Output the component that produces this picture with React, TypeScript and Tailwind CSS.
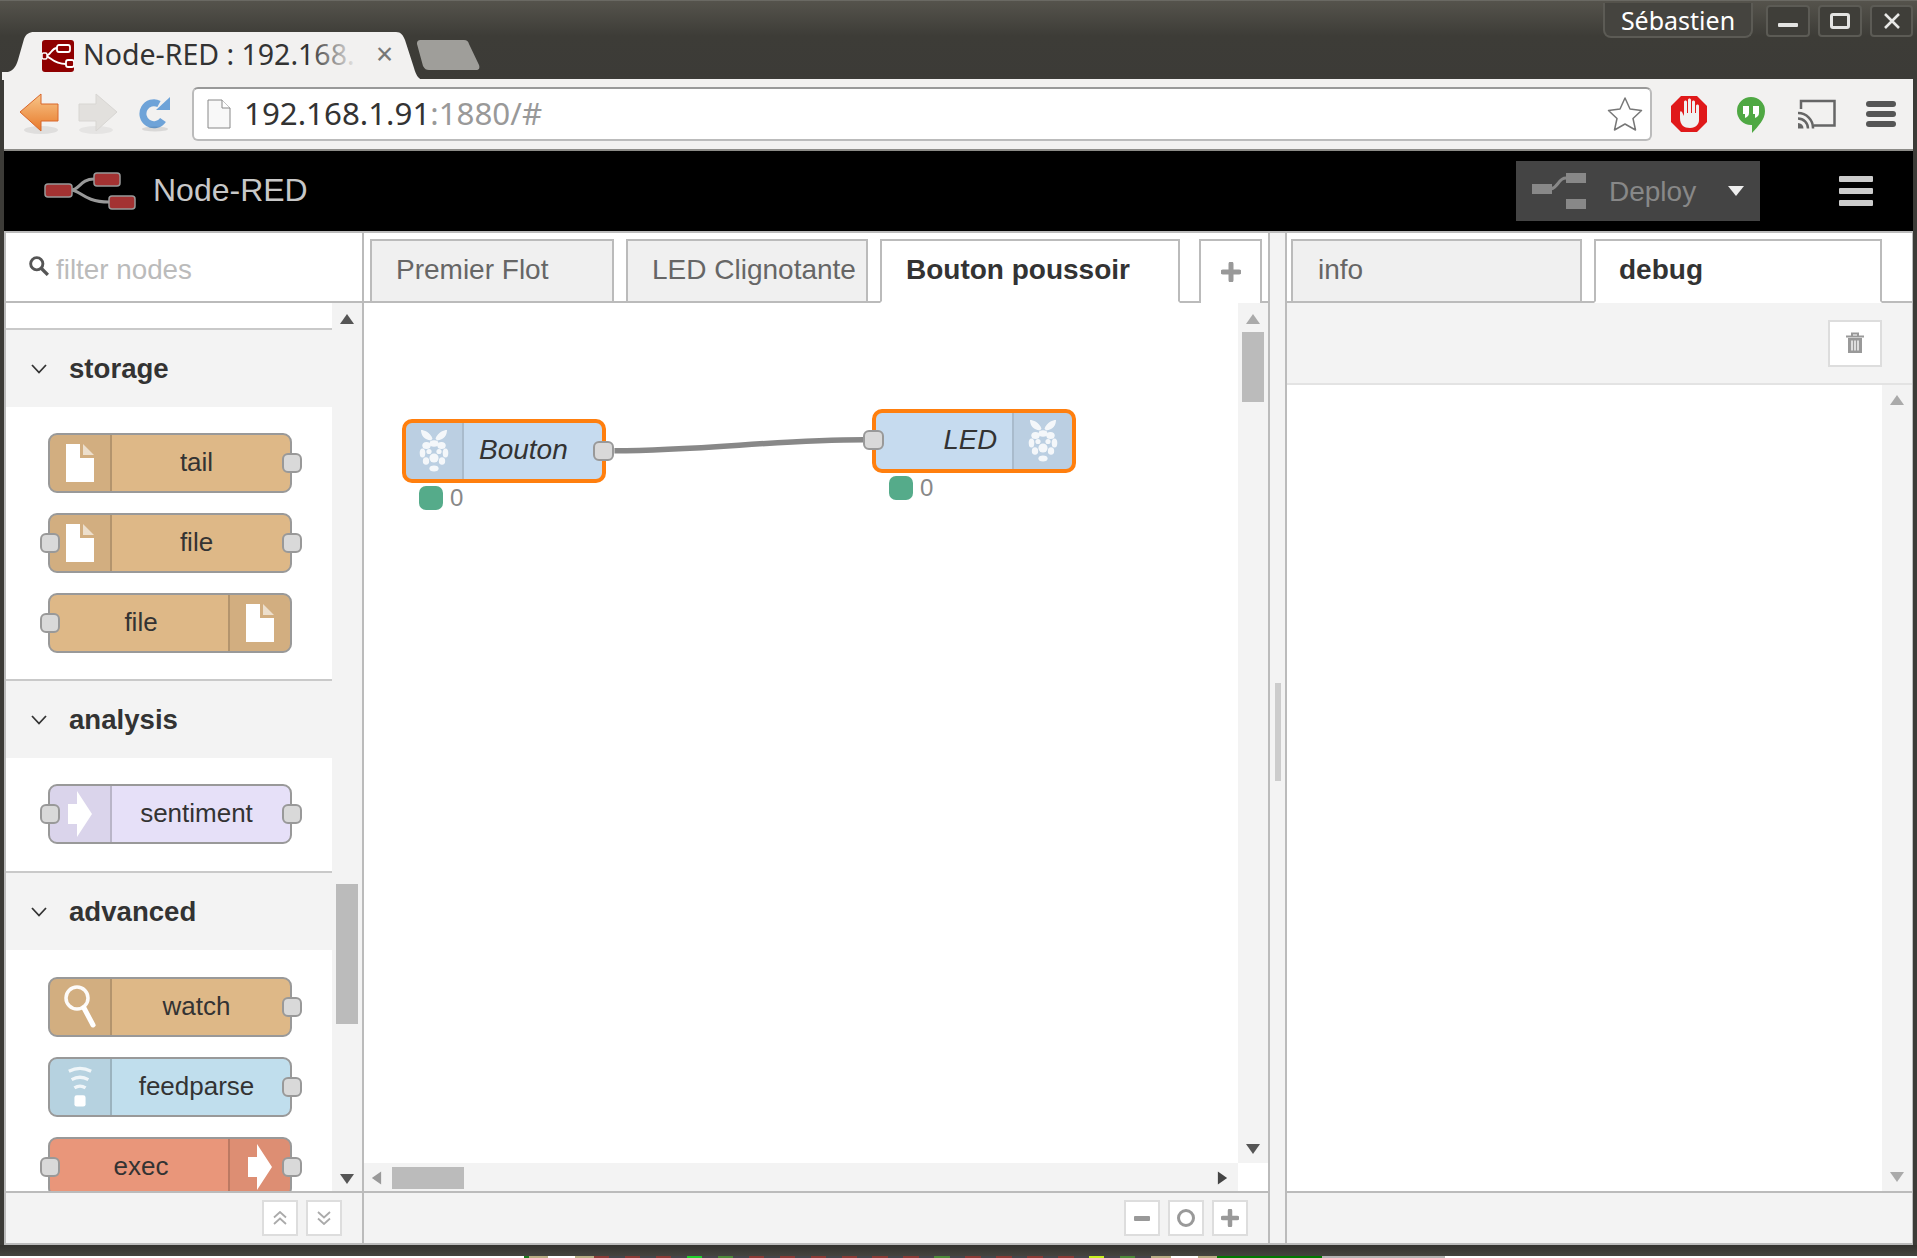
import React from "react";

const UI = "font-['Liberation_Sans',Arial,sans-serif]";
const CHROME = "font-['Noto_Sans',sans-serif]";

function Tri({ dir, color, className }: { dir: "up" | "down" | "left" | "right"; color: string; className?: string }) {
  const pts = { up: "0,12 7,2 14,12", down: "0,2 14,2 7,12", left: "12,0 12,14 2,7", right: "2,0 2,14 12,7" }[dir];
  return (
    <svg viewBox="0 0 14 14" className={className ?? "w-[14px] h-[14px]"}>
      <polygon points={pts} fill={color} />
    </svg>
  );
}

function FileIcon() {
  return (
    <svg viewBox="0 0 28 38" className="w-[28px] h-[38px]">
      <path d="M0 0H14V14H28V38H0Z" fill="#fff" />
      <path d="M17 0L28 11H17Z" fill="#fff" fillOpacity="0.6" />
    </svg>
  );
}
function ArrowIcon() {
  return (
    <svg viewBox="0 0 24 46" className="w-[24px] h-[46px]">
      <path d="M0 13H9V0L24 23L9 46V33H0Z" fill="#fff" />
    </svg>
  );
}
function WatchIcon() {
  return (
    <svg viewBox="0 0 32 44" className="w-[32px] h-[44px]">
      <circle cx="13" cy="13" r="11" fill="none" stroke="#fff" strokeWidth="3.5" opacity="0.95" />
      <path d="M20 23L29 40" stroke="#fff" strokeWidth="5" strokeLinecap="round" />
    </svg>
  );
}
function FeedIcon() {
  return (
    <svg viewBox="0 0 28 44" className="w-[26px] h-[42px]">
      <path d="M2 5Q14 -1 26 5" fill="none" stroke="#fff" strokeWidth="3.5" opacity="0.8" />
      <path d="M5 14Q14 9 23 14" fill="none" stroke="#fff" strokeWidth="3.5" opacity="0.8" />
      <path d="M8 23Q14 19 20 23" fill="none" stroke="#fff" strokeWidth="3.5" opacity="0.8" />
      <rect x="8" y="31" width="12" height="12" rx="2.5" fill="#fff" />
    </svg>
  );
}
function PiIcon() {
  return (
    <svg viewBox="0 0 32 44" className="w-[32px] h-[44px]">
      <g fill="#fff" opacity="0.85">
        <path d="M14.500 9.500C12 3 6 1 3 1C3 6 6 11 13 11.500Z" />
        <path d="M17.500 9.500C20 3 26 1 29 1C29 6 26 11 19 11.500Z" />
        <ellipse cx="16" cy="14.500" rx="4.500" ry="3.200" />
        <ellipse cx="8.500" cy="16.500" rx="4.200" ry="3.600" />
        <ellipse cx="23.500" cy="16.500" rx="4.200" ry="3.600" />
        <ellipse cx="4.500" cy="24" rx="2.800" ry="4.600" />
        <ellipse cx="27.500" cy="24" rx="2.800" ry="4.600" />
        <circle cx="11" cy="22.500" r="2.600" />
        <circle cx="21" cy="22.500" r="2.600" />
        <circle cx="16" cy="29" r="4.600" />
        <ellipse cx="8" cy="32" rx="3.200" ry="3.800" />
        <ellipse cx="24" cy="32" rx="3.200" ry="3.800" />
        <ellipse cx="16" cy="39.500" rx="4.600" ry="3" />
      </g>
    </svg>
  );
}

function Port({ className }: { className: string }) {
  return <div className={`absolute h-[20px] rounded-[6px] border-[2px] border-[#999] bg-[#d9d9d9] ${className}`} />;
}

function PaletteNode({
  label,
  color,
  icon,
  side,
  inPort,
  outPort,
}: {
  label: string;
  color: string;
  icon: React.ReactNode;
  side: "l" | "r";
  inPort?: boolean;
  outPort?: boolean;
}) {
  const iconBox = (
    <div
      className={`w-[62px] h-full shrink-0 flex items-center justify-center bg-black/5 ${
        side === "l" ? "border-r-2 rounded-l-[7px]" : "border-l-2 rounded-r-[7px]"
      } border-black/15`}
    >
      {icon}
    </div>
  );
  return (
    <div className={`relative w-[244px] h-[60px] rounded-[9px] border-2 border-[#999] flex ${color}`}>
      {side === "l" && iconBox}
      <div className={`flex-1 flex items-center justify-center pb-[2px] text-[26px] text-[#333] ${side === "l" ? "pr-[9px]" : "pl-[4px]"}`}>
        {label}
      </div>
      {side === "r" && iconBox}
      {inPort && <Port className="w-[20px] left-[-10px] top-[18px]" />}
      {outPort && <Port className="w-[20px] right-[-12px] top-[18px]" />}
    </div>
  );
}

function GroupHeader({ title }: { title: string }) {
  return (
    <div className="h-[79px] border-t-2 border-[#c9c9c9] bg-[#f3f3f3] flex items-center pl-[25px]">
      <svg viewBox="0 0 16 10" className="w-[16px] h-[10px] mr-[22px]">
        <path d="M1 1L8 8.5L15 1" fill="none" stroke="#333" strokeWidth="1.8" />
      </svg>
      <span className="text-[27.6px] font-bold text-[#333]">{title}</span>
    </div>
  );
}

function Tab({ label, active, w, pad, className = "" }: { label: string; active?: boolean; w: string; pad: string; className?: string }) {
  return (
    <div
      className={`h-[64px] mb-[-2px] border-2 border-[#bbb] flex items-center text-[28px] shrink-0 ${pad} ${w} ${className} ${
        active ? "bg-white border-b-white font-bold text-[#333]" : "bg-[#f0f0f0] text-[#666]"
      }`}
    >
      <span className="relative top-[-1px] whitespace-nowrap">{label}</span>
    </div>
  );
}

function SmallBtn({ children, className = "" }: { children: React.ReactNode; className?: string }) {
  return (
    <div className={`w-[36px] h-[36px] bg-white border-2 border-[#ddd] flex items-center justify-center ${className}`}>{children}</div>
  );
}

function WinBtn({ children, w }: { children: React.ReactNode; w: string }) {
  return (
    <div className={`${w} h-[32px] rounded-[4px] border-2 border-[#5c5b55] bg-[#3f3e39] flex items-center justify-center`}>{children}</div>
  );
}

function CanvasStatus({ className }: { className: string }) {
  return (
    <div className={`absolute flex items-center gap-[7px] ${className}`}>
      <div className="w-[24px] h-[24px] rounded-[7px] bg-[#55ab8a]" />
      <span className="text-[24px] leading-none text-[#888]">0</span>
    </div>
  );
}

function TitleBar() {
  return (
    <div className="h-[79px] flex bg-[linear-gradient(#55534c,#3d3c37_45%,#3c3b37)] border-t border-[#6a6963]">
      <div className={`relative w-[422px] h-[48px] mt-[31px] shrink-0 flex items-center ${CHROME}`}>
        <svg viewBox="0 0 422 48" className="absolute inset-0 w-[422px] h-[48px]">
          <path d="M2 48V40H8C14 38 16 34 18 28L24 7C26 2 29 0 34 0H396C401 0 403 3 405 8L414 36C416 43 418 46 422 48Z" fill="#f2f1f0" />
        </svg>
        <svg viewBox="0 0 32 32" className="relative ml-[42px] w-[32px] h-[32px]">
          <rect width="32" height="32" rx="3" fill="#8f0000" />
          <path d="M3 16C9 16 9 8 15 8M3 16C9 16 10 24 24 24" fill="none" stroke="#fff" strokeWidth="1.8" />
          <rect x="15" y="5" width="13" height="7" rx="2" fill="#8f0000" stroke="#fff" strokeWidth="1.8" />
          <rect x="24" y="20" width="8" height="7" rx="2" fill="#8f0000" stroke="#fff" strokeWidth="1.8" />
          <rect x="0" y="13" width="5" height="6" rx="1.5" fill="#8f0000" stroke="#fff" strokeWidth="1.5" />
        </svg>
        <div className="relative top-[-2px] ml-[9px] w-[279px] whitespace-nowrap text-[28.5px] leading-none text-[#333]">
          Node-RED : 192.168.
          <div className="absolute left-[225px] w-[50px] top-0 bottom-0 bg-[linear-gradient(to_right,rgba(242,241,240,0),#f2f1f0)]" />
        </div>
        <span className="relative top-[-2px] ml-[14px] text-[30px] leading-none text-[#777]">×</span>
      </div>
      <div className="mt-[9px] ml-[-5px] w-[63px] h-[30px] shrink-0 relative top-[30px]">
        <svg viewBox="0 0 63 30" className="w-[63px] h-[30px]">
          <path d="M0 4C0 1 1 0 4 0H47C50 0 51 1 52 4L62 25C63 28 62 30 59 30H12C9 30 8 29 6 26Z" fill="#9f9e9a" />
        </svg>
      </div>
      <div className="flex-1" />
      <div className={`flex items-start pr-[4px] ${CHROME}`}>
        <div className="w-[150px] h-[35px] mt-[2px] rounded-b-[8px] border-2 border-t-0 border-[#5c5b55] flex items-center justify-center text-[25px] pt-[2px] text-white bg-[#45443f]">
          Sébastien
        </div>
        <div className="flex gap-[8px] ml-[13px] mt-[4px]">
          <WinBtn w="w-[44px]">
            <div className="w-[20px] h-[4px] mt-[8px] bg-[#e4e4e2] rounded-[1px]" />
          </WinBtn>
          <WinBtn w="w-[44px]">
            <div className="w-[20px] h-[16px] border-[3px] border-[#e4e4e2] rounded-[3px]" />
          </WinBtn>
          <WinBtn w="w-[43px]">
            <svg viewBox="0 0 16 16" className="w-[16px] h-[16px]">
              <path d="M1 1L15 15M15 1L1 15" stroke="#e8e8e6" strokeWidth="2.6" />
            </svg>
          </WinBtn>
        </div>
      </div>
    </div>
  );
}

function Toolbar() {
  return (
    <div className={`h-[72px] bg-[#f2f1f0] border-b-2 border-[#8d8c88] flex items-center shrink-0 ${CHROME}`}>
      <svg viewBox="0 0 40 42" className="ml-[15px] w-[40px] h-[42px]">
        <defs>
          <linearGradient id="bk" x1="0" y1="0" x2="0" y2="1">
            <stop offset="0" stopColor="#f7c68a" />
            <stop offset="1" stopColor="#e8792a" />
          </linearGradient>
        </defs>
        <ellipse cx="22" cy="37" rx="17" ry="4" fill="#000" opacity="0.08" />
        <path d="M1 19L22 1V11H39V28H22V38Z" fill="url(#bk)" stroke="#d9662a" strokeWidth="1" />
      </svg>
      <svg viewBox="0 0 40 42" className="ml-[19px] w-[40px] h-[42px]">
        <ellipse cx="18" cy="37" rx="17" ry="4" fill="#000" opacity="0.05" />
        <path d="M39 19L18 1V11H1V28H18V38Z" fill="#e2e0dd" stroke="#d8d6d3" strokeWidth="1" />
      </svg>
      <svg viewBox="0 0 32 36" className="ml-[21px] w-[32px] h-[36px]">
        <path d="M24 24A11 11 0 1 1 20 8" fill="none" stroke="#6ea3d8" strokeWidth="7" />
        <path d="M17 14L31 14L31 1Z" fill="#6ea3d8" />
        <ellipse cx="16" cy="33" rx="13" ry="2.5" fill="#000" opacity="0.1" />
      </svg>
      <div className="ml-[21px] w-[1460px] h-[54px] rounded-[6px] border-2 border-[#bbb] border-t-[#999] bg-white flex items-center">
        <svg viewBox="0 0 24 30" className="ml-[13px] w-[24px] h-[30px]">
          <path d="M1 1H15L23 9V29H1Z" fill="#f8f8f8" stroke="#888" strokeWidth="1" />
          <path d="M15 1V9H23" fill="#fff" stroke="#888" strokeWidth="1" />
        </svg>
        <div className="ml-[13px] text-[31.3px] leading-none whitespace-nowrap">
          <span className="text-[#333]">192.168.1.91</span>
          <span className="text-[#999]">:1880/#</span>
        </div>
        <div className="flex-1" />
        <svg viewBox="0 0 36 36" className="mr-[7px] w-[36px] h-[36px]">
          <path d="M18 2L23 13L34.500 14.500L26 22.500L28.500 34L18 28L7.500 34L10 22.500L1.500 14.500L13 13Z" fill="#fff" stroke="#777" strokeWidth="1.5" strokeLinejoin="round" />
        </svg>
      </div>
      <svg viewBox="0 0 36 36" className="ml-[19px] w-[36px] h-[36px]">
        <path d="M10 0H26L36 10V26L26 36H10L0 26V10Z" fill="#e0191a" />
        <path d="M9 17V22C9 29 13 32 19 32C25 32 28 28 28 24V10C28 8 25 8 25 10V17H24V6C24 4 21 4 21 6V17H20V4C20 2 17 2 17 4V17H16V6C16 4 13 4 13 6V20L11 16C10 15 9 15 9 17Z" fill="#f1f1f1" />
      </svg>
      <svg viewBox="0 0 28 36" className="relative top-[1px] ml-[30px] w-[28px] h-[36px]">
        <path d="M14 0A14 14 0 0 1 28 14C28 23 21 29 15 36V28H14A14 14 0 0 1 14 0Z" fill="#4fa843" />
        <path d="M6 9H12V16C12 19 10 20 8 21V17H6ZM16 9H22V16C22 19 20 20 18 21V17H16Z" fill="#fff" />
      </svg>
      <svg viewBox="0 0 38 30" className="ml-[33px] w-[38px] h-[30px]">
        <path d="M3 10V2H36.500V26.500H16" fill="none" stroke="#666" strokeWidth="2.500" />
        <path d="M0 14A15 15 0 0 1 15 29.500M0 19.500A10 10 0 0 1 10 29.500" fill="none" stroke="#666" strokeWidth="2.500" />
        <path d="M0 24A5.500 5.500 0 0 1 5.500 29.500H0Z" fill="#666" />
      </svg>
      <div className="ml-[30px] flex flex-col gap-[4px]">
        <div className="w-[30px] h-[6px] rounded-[3px] bg-[#555]" />
        <div className="w-[30px] h-[6px] rounded-[3px] bg-[#555]" />
        <div className="w-[30px] h-[6px] rounded-[3px] bg-[#555]" />
      </div>
    </div>
  );
}

function Header() {
  return (
    <div className="h-[80px] bg-black flex items-center shrink-0">
      <svg viewBox="0 0 92 38" className="ml-[40px] w-[92px] h-[38px]">
        <path d="M27 18C36 18 36 7 50 7M27 18C36 18 40 30 65 30" fill="none" stroke="#999" strokeWidth="3" />
        <rect x="1" y="12" width="27" height="13" rx="3" fill="#a33232" stroke="#999" strokeWidth="1.5" />
        <rect x="50" y="1" width="26" height="13" rx="3" fill="#a33232" stroke="#999" strokeWidth="1.5" />
        <rect x="65" y="24" width="26" height="13" rx="3" fill="#a33232" stroke="#999" strokeWidth="1.5" />
      </svg>
      <span className="relative top-[-1px] ml-[17px] text-[32px] text-[#c8c8c8]">Node-RED</span>
      <div className="flex-1" />
      <div className="w-[244px] h-[60px] bg-[#444] flex items-center">
        <svg viewBox="0 0 54 36" className="ml-[16px] w-[54px] h-[36px]">
          <rect x="0" y="11" width="20" height="10" fill="#888" />
          <rect x="34" y="0" width="20" height="10" fill="#888" />
          <rect x="34" y="26" width="20" height="10" fill="#888" />
          <path d="M19 16C27 14 26 5 34 5" fill="none" stroke="#888" strokeWidth="3" />
        </svg>
        <span className="relative top-[1px] ml-[23px] text-[28px] text-[#888]">Deploy</span>
        <svg viewBox="0 0 16 10" className="ml-[32px] w-[16px] h-[10px]">
          <path d="M0 0H16L8 10Z" fill="#eee" />
        </svg>
      </div>
      <div className="ml-[79px] mr-[40px] flex flex-col gap-[6px]">
        <div className="w-[34px] h-[6px] rounded-[1px] bg-[#ccc]" />
        <div className="w-[34px] h-[6px] rounded-[1px] bg-[#ccc]" />
        <div className="w-[34px] h-[6px] rounded-[1px] bg-[#ccc]" />
      </div>
    </div>
  );
}

function Palette() {
  return (
    <div className="w-[360px] shrink-0 border-l-2 border-r-2 border-[#bbb] flex flex-col">
      <div className="h-[70px] border-b-2 border-[#bbb] bg-white flex items-center pl-[23px] shrink-0">
        <svg viewBox="0 0 18 18" className="w-[20px] h-[20px] relative top-[-1px]">
          <circle cx="7" cy="7" r="5.500" fill="none" stroke="#555" strokeWidth="2.6" />
          <path d="M11 11L17 17" stroke="#555" strokeWidth="3" />
        </svg>
        <span className="ml-[7px] text-[27.8px] text-[#bbb] relative top-[3px]">filter nodes</span>
      </div>
      <div className="flex-1 min-h-0 flex">
        <div className="w-[326px] overflow-hidden bg-white pt-[25px]">
          <GroupHeader title="storage" />
          <div className="pt-[26px] pb-[26px] pl-[42px] flex flex-col gap-[20px] bg-white">
            <PaletteNode label="tail" color="bg-[#deb887]" icon={<FileIcon />} side="l" outPort />
            <PaletteNode label="file" color="bg-[#deb887]" icon={<FileIcon />} side="l" inPort outPort />
            <PaletteNode label="file" color="bg-[#deb887]" icon={<FileIcon />} side="r" inPort />
          </div>
          <GroupHeader title="analysis" />
          <div className="pt-[26px] pb-[27px] pl-[42px] flex flex-col gap-[20px] bg-white">
            <PaletteNode label="sentiment" color="bg-[#e6e0f8]" icon={<ArrowIcon />} side="l" inPort outPort />
          </div>
          <GroupHeader title="advanced" />
          <div className="pt-[27px] pl-[42px] flex flex-col gap-[20px] bg-white">
            <PaletteNode label="watch" color="bg-[#deb887]" icon={<WatchIcon />} side="l" outPort />
            <PaletteNode label="feedparse" color="bg-[#c0deed]" icon={<FeedIcon />} side="l" outPort />
            <PaletteNode label="exec" color="bg-[#e9967a]" icon={<ArrowIcon />} side="r" inPort outPort />
          </div>
        </div>
        <div className="w-[30px] bg-[#f3f3f3] flex flex-col items-center pt-[9px] pb-[5px]">
          <Tri dir="up" color="#555" />
          <div className="flex-1 w-full flex flex-col items-center pt-[558px]">
            <div className="w-[22px] h-[140px] bg-[#bbb]" />
          </div>
          <Tri dir="down" color="#555" />
        </div>
      </div>
      <div className="h-[52px] border-t-2 border-[#bbb] bg-[#f3f3f3] flex items-center justify-end pr-[20px] gap-[8px] shrink-0">
        <SmallBtn>
          <svg viewBox="0 0 14 14" className="w-[14px] h-[14px]">
            <path d="M1 6.500L7 1L13 6.500M1 13L7 7.500L13 13" fill="none" stroke="#aaa" strokeWidth="1.800" />
          </svg>
        </SmallBtn>
        <SmallBtn>
          <svg viewBox="0 0 14 14" className="w-[14px] h-[14px]">
            <path d="M1 1L7 6.500L13 1M1 7.500L7 13L13 7.500" fill="none" stroke="#aaa" strokeWidth="1.800" />
          </svg>
        </SmallBtn>
      </div>
    </div>
  );
}

function Workspace() {
  return (
    <div className="w-[906px] shrink-0 border-r-2 border-[#bbb] flex flex-col">
      <div className="h-[70px] border-b-2 border-[#bbb] bg-white flex items-end pl-[6px] shrink-0">
        <Tab label="Premier Flot" w="w-[244px]" pad="pl-[24px]" />
        <Tab label="LED Clignotante" w="w-[242px]" pad="pl-[24px]" className="ml-[12px]" />
        <Tab label="Bouton poussoir" active w="w-[300px]" pad="pl-[24px]" className="ml-[12px]" />
        <div className="ml-[19px] w-[63px] h-[64px] mb-[-2px] bg-white border-2 border-b-0 border-[#bbb] flex items-center justify-center shrink-0">
          <svg viewBox="0 0 20 20" className="w-[20px] h-[20px]">
            <path d="M10 2V18M2 10H18" stroke="#999" strokeWidth="5" strokeLinecap="round" />
          </svg>
        </div>
      </div>
      <div className="flex-1 min-h-0 flex flex-col">
        <div className="flex-1 min-h-0 flex">
          <div className="flex-1 relative bg-white">
            <svg viewBox="0 0 874 860" className="absolute inset-0 w-[874px] h-[858px]">
              <path d="M250 148C340 148 410 137 500 137" fill="none" stroke="#888" strokeWidth="5.500" />
            </svg>
            <div className="absolute left-[38px] top-[116px] w-[204px] h-[64px] rounded-[10px] border-4 border-[#ff7f0e] bg-[#c6dbef] flex">
              <div className="w-[58px] h-full rounded-l-[6px] bg-black/5 border-r-2 border-black/10 flex items-center justify-center shrink-0">
                <PiIcon />
              </div>
              <div className="flex items-center pl-[15px] pb-[2px] italic text-[28px] text-[#333]">Bouton</div>
              <Port className="left-[187px] top-[18px] w-[21px]" />
            </div>
            <div className="absolute left-[508px] top-[106px] w-[204px] h-[64px] rounded-[10px] border-4 border-[#ff7f0e] bg-[#c6dbef] flex justify-end">
              <div className="flex items-center pr-[15px] pb-[2px] italic text-[27.5px] text-[#333]">LED</div>
              <div className="w-[60px] h-full rounded-r-[6px] bg-black/5 border-l-2 border-black/10 flex items-center justify-center shrink-0">
                <PiIcon />
              </div>
              <Port className="left-[-13px] top-[17px] w-[21px]" />
            </div>
            <CanvasStatus className="left-[55px] top-[183px]" />
            <CanvasStatus className="left-[525px] top-[173px]" />
          </div>
          <div className="w-[30px] bg-[#f3f3f3] flex flex-col items-center pt-[9px] pb-[7px]">
            <Tri dir="up" color="#aaa" />
            <div className="flex-1 w-full flex flex-col items-center pt-[6px]">
              <div className="w-[22px] h-[70px] bg-[#bbb]" />
            </div>
            <Tri dir="down" color="#555" />
          </div>
        </div>
        <div className="h-[28px] flex shrink-0">
          <div className="flex-1 bg-[#f3f3f3] flex items-center pl-[6px] pr-[9px] pt-[2px]">
            <Tri dir="left" color="#999" className="w-[13px] h-[14px]" />
            <div className="ml-[9px] w-[72px] h-[22px] bg-[#bbb]" />
            <div className="flex-1" />
            <Tri dir="right" color="#444" className="w-[13px] h-[14px]" />
          </div>
          <div className="w-[30px] bg-white" />
        </div>
      </div>
      <div className="h-[52px] border-t-2 border-[#bbb] bg-[#f3f3f3] flex items-center justify-end pr-[20px] gap-[8px] shrink-0">
        <SmallBtn>
          <div className="w-[16px] h-[5px] rounded-[1px] bg-[#999]" />
        </SmallBtn>
        <SmallBtn>
          <div className="w-[18px] h-[18px] rounded-full border-[3px] border-[#999]" />
        </SmallBtn>
        <SmallBtn>
          <svg viewBox="0 0 20 20" className="w-[18px] h-[18px]">
            <path d="M10 2V18M2 10H18" stroke="#999" strokeWidth="5" strokeLinecap="round" />
          </svg>
        </SmallBtn>
      </div>
    </div>
  );
}

function Sidebar() {
  return (
    <div className="flex-1 min-w-0 border-l-2 border-r border-[#bbb] flex flex-col">
      <div className="h-[70px] border-b-2 border-[#bbb] bg-white flex items-end pl-[4px] shrink-0">
        <Tab label="info" w="w-[291px]" pad="pl-[25px]" />
        <Tab label="debug" active w="w-[288px]" pad="pl-[23px]" className="ml-[12px]" />
      </div>
      <div className="h-[82px] bg-[#f3f3f3] border-b-2 border-[#e3e3e3] flex items-center justify-end pr-[30px] shrink-0">
        <div className="w-[54px] h-[47px] bg-white border-2 border-[#ddd] flex items-center justify-center">
          <svg viewBox="0 0 20 22" className="w-[20px] h-[22px]">
            <path d="M1 4.500H19M7 4V1.500H13V4" fill="none" stroke="#999" strokeWidth="2" />
            <path d="M3 6H17V21H3Z" fill="#999" />
            <path d="M7 8.500V18.500M10 8.500V18.500M13 8.500V18.500" stroke="#f3f3f3" strokeWidth="1.500" />
          </svg>
        </div>
      </div>
      <div className="flex-1 min-h-0 flex">
        <div className="flex-1 bg-white" />
        <div className="w-[30px] bg-[#f3f3f3] flex flex-col items-center justify-between pt-[8px] pb-[7px]">
          <Tri dir="up" color="#aaa" />
          <Tri dir="down" color="#aaa" />
        </div>
      </div>
      <div className="h-[52px] border-t-2 border-[#bbb] bg-[#f3f3f3] shrink-0" />
    </div>
  );
}

function BottomStrip() {
  const mid = ["#8a3a36", "#45454a", "#8a3a36", "#45454a", "#8a3a36", "#45454a", "#1fd02c", "#45454a", "#4d8a3a", "#45454a", "#8a3a36", "#45454a", "#8a3a36", "#45454a", "#8a3a36", "#45454a", "#8a3a36", "#45454a", "#8a3a36", "#45454a", "#8a3a36", "#45454a", "#4d8a3a", "#45454a", "#8a3a36", "#45454a", "#8a3a36", "#45454a", "#8a3a36", "#45454a", "#8a3a36", "#45454a", "#c8f020", "#45454a", "#4d8a3a", "#45454a"];
  return (
    <div className="h-[2px] bg-white flex shrink-0 pl-[524px]">
      <div className="w-[5px] bg-[#1a7a1a]" />
      <div className="w-[19px] bg-[#b9ae85]" />
      <div className="w-[27px] bg-white" />
      <div className="w-[19px] bg-[#b9ae85]" />
      <div className="w-[557px] flex">
        {mid.map((c, i) => (
          <div key={i} className="flex-1" style={{ background: c }} />
        ))}
      </div>
      <div className="w-[20px] bg-[#b9ae85]" />
      <div className="w-[27px] bg-white" />
      <div className="w-[19px] bg-[#b9ae85]" />
      <div className="w-[105px] bg-[#007a00]" />
      <div className="w-[123px] bg-[#b4b4b4]" />
    </div>
  );
}

export default function App() {
  return (
    <div className={`w-[1917px] h-[1258px] bg-[#3c3b37] flex flex-col overflow-hidden ${UI}`}>
      <TitleBar />
      <div className="h-[1166px] mx-[4px] flex flex-col shrink-0 overflow-hidden">
        <Toolbar />
        <Header />
        <div className="h-[2px] bg-[#bbb] shrink-0" />
        <div className="flex-1 min-h-0 flex">
          <Palette />
          <Workspace />
          <div className="w-[15px] bg-[#f3f3f3] flex items-center justify-center shrink-0">
            <div className="w-[6px] h-[98px] mb-[12px] bg-[#ccc]" />
          </div>
          <Sidebar />
        </div>
        <div className="h-[2px] bg-[#bbb] shrink-0" />
      </div>
      <div className="flex-1 bg-[linear-gradient(#33322e,#45443f)]" />
      <BottomStrip />
    </div>
  );
}
